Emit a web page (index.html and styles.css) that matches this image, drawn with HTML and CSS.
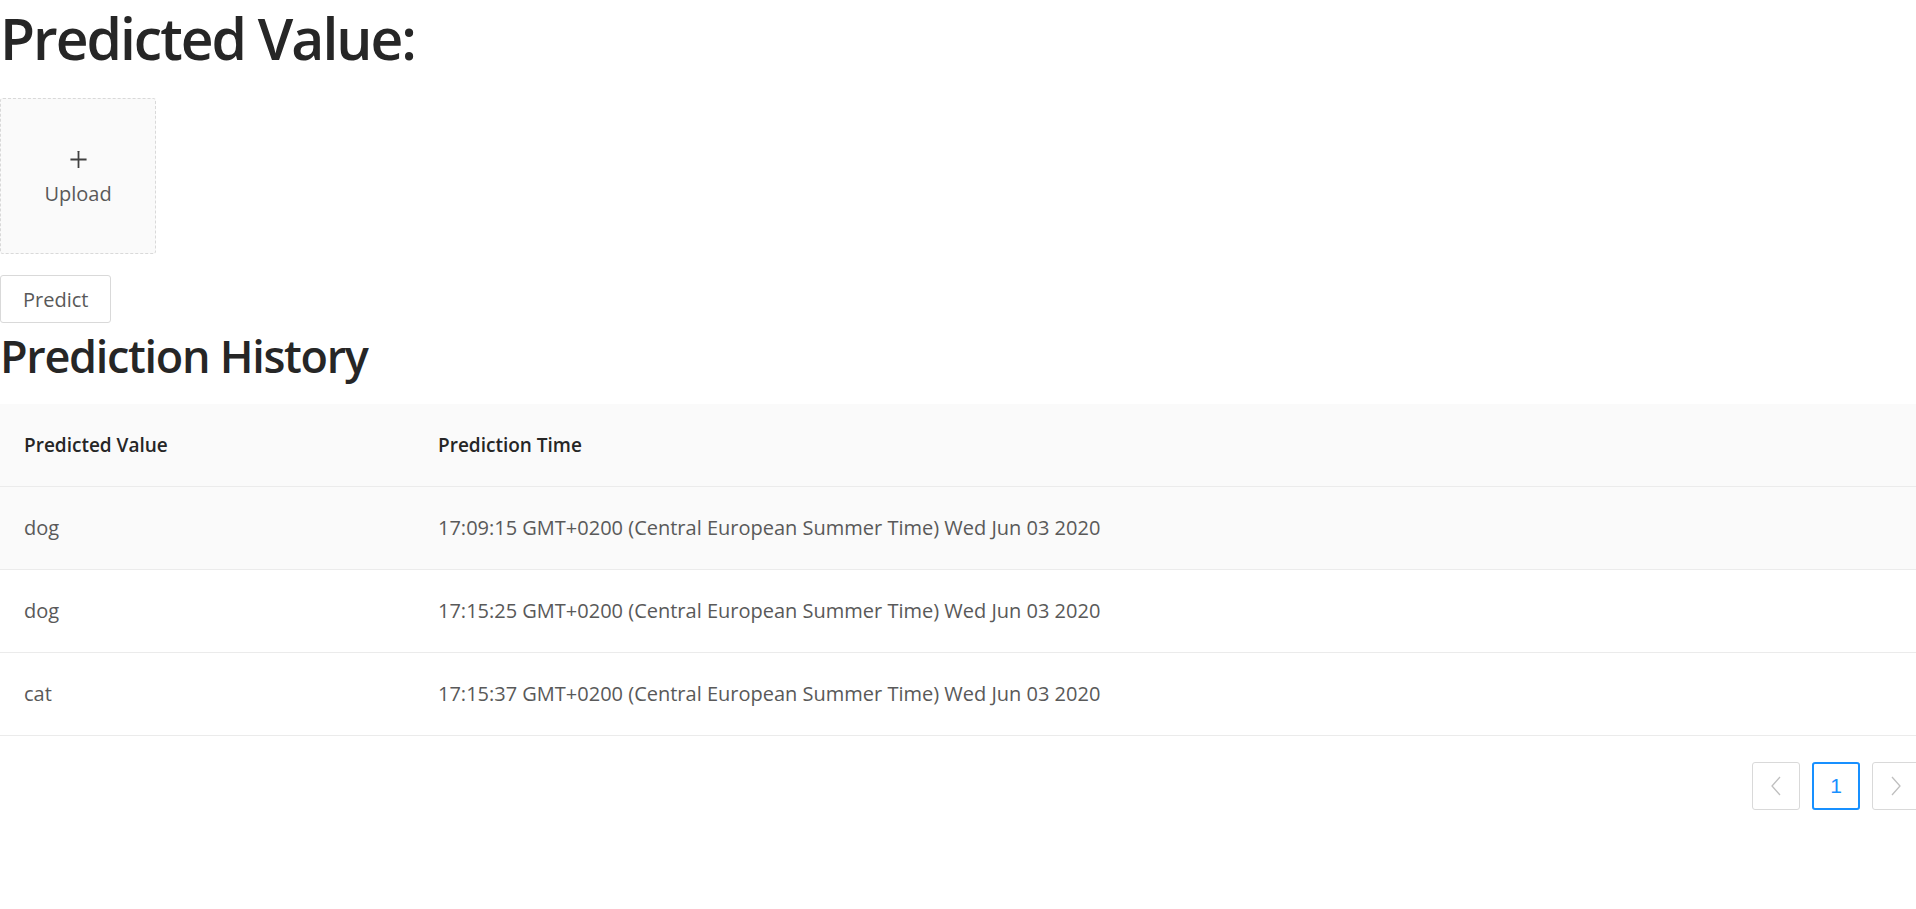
FILE: index.html
```html
<!DOCTYPE html>
<html>
<head>
<meta charset="utf-8">
<link rel="stylesheet" href="styles.css">
</head>
<body>
<div class="page">
  <h1 class="title">Predicted Value:</h1>
  <div class="upload">
    <svg class="plus" viewBox="64 64 896 896" width="21" height="21"><path d="M482 152h60q8 0 8 8v704q0 8-8 8h-60q-8 0-8-8V160q0-8 8-8z"/><path d="M176 474h672q8 0 8 8v60q0 8-8 8H176q-8 0-8-8v-60q0-8 8-8z"/></svg>
    <div class="upload-text">Upload</div>
  </div>
  <button class="btn">Predict</button>
  <h2 class="subtitle">Prediction History</h2>
  <table class="table">
    <thead>
      <tr><th class="c1">Predicted Value</th><th>Prediction Time</th></tr>
    </thead>
    <tbody>
      <tr class="hover"><td>dog</td><td>17:09:15 GMT+0200 (Central European Summer Time) Wed Jun 03 2020</td></tr>
      <tr><td>dog</td><td>17:15:25 GMT+0200 (Central European Summer Time) Wed Jun 03 2020</td></tr>
      <tr><td>cat</td><td>17:15:37 GMT+0200 (Central European Summer Time) Wed Jun 03 2020</td></tr>
    </tbody>
  </table>
  <div class="pagination">
    <div class="pg-item pg-arrow"><svg width="10" height="20" viewBox="0 0 10 20"><polyline points="9,1 1,10 9,19" fill="none" stroke="#bfbfbf" stroke-width="1.3"/></svg></div>
    <div class="pg-item pg-active">1</div>
    <div class="pg-item pg-arrow"><svg width="10" height="20" viewBox="0 0 10 20"><polyline points="1,1 9,10 1,19" fill="none" stroke="#bfbfbf" stroke-width="1.3"/></svg></div>
  </div>
</div>
</body>
</html>
```
FILE: styles.css
```css
html, body {
  margin: 0;
  padding: 0;
  background: #fff;
  overflow-x: hidden;
}
body {
  font-family: "Open Sans", "Noto Sans", sans-serif;
  color: #595959;
  font-size: 21px;
}
.page {
  display: flex;
  flex-direction: column;
  align-items: flex-start;
}
.title {
  margin: 0 0 22px;
  font-size: 57px;
  line-height: 76px;
  font-weight: 600;
  color: #262626;
  letter-spacing: -2px;
}
.upload {
  box-sizing: border-box;
  width: 156px;
  height: 156px;
  border: 1px dashed #d9d9d9;
  border-radius: 3px;
  background: #fafafa;
  display: flex;
  flex-direction: column;
  align-items: center;
  justify-content: center;
  padding-top: 6px;
  margin-bottom: 21px;
}
.plus { fill: #404040; }
.upload-text {
  margin-top: 9px;
  font-size: 20px;
  line-height: 30px;
  color: #595959;
}
.btn {
  box-sizing: border-box;
  height: 48px;
  padding: 0 22px;
  border: 1px solid #d9d9d9;
  border-radius: 3px;
  background: #fff;
  font-family: inherit;
  font-size: 20px;
  color: #595959;
}
.subtitle {
  margin: 0 0 16px;
  font-size: 45px;
  line-height: 65px;
  font-weight: 600;
  color: #262626;
  letter-spacing: -1.3px;
}
.table {
  width: 100%;
  border-collapse: collapse;
  font-size: 20px;
}
.table th, .table td {
  text-align: left;
  padding: 24px;
  line-height: 34px;
  border-bottom: 1px solid #ebebeb;
}
.table th {
  background: #fafafa;
  color: #262626;
  font-weight: 600;
  font-size: 19px;
}
.table td { color: #595959; }
.table .c1 { width: 366px; }
.table tr.hover td { background: #fafafa; }
.pagination {
  align-self: stretch;
  display: flex;
  justify-content: flex-end;
  gap: 12px;
  margin-top: 26px;
  margin-right: -4px;
}
.pg-item {
  box-sizing: border-box;
  width: 48px;
  height: 48px;
  border: 1px solid #d9d9d9;
  border-radius: 3px;
  display: flex;
  align-items: center;
  justify-content: center;
  font-family: "Liberation Sans", Arial, sans-serif;
  font-size: 21px;
}
.pg-active {
  border: 2px solid #1890ff;
  color: #1890ff;
}
```
